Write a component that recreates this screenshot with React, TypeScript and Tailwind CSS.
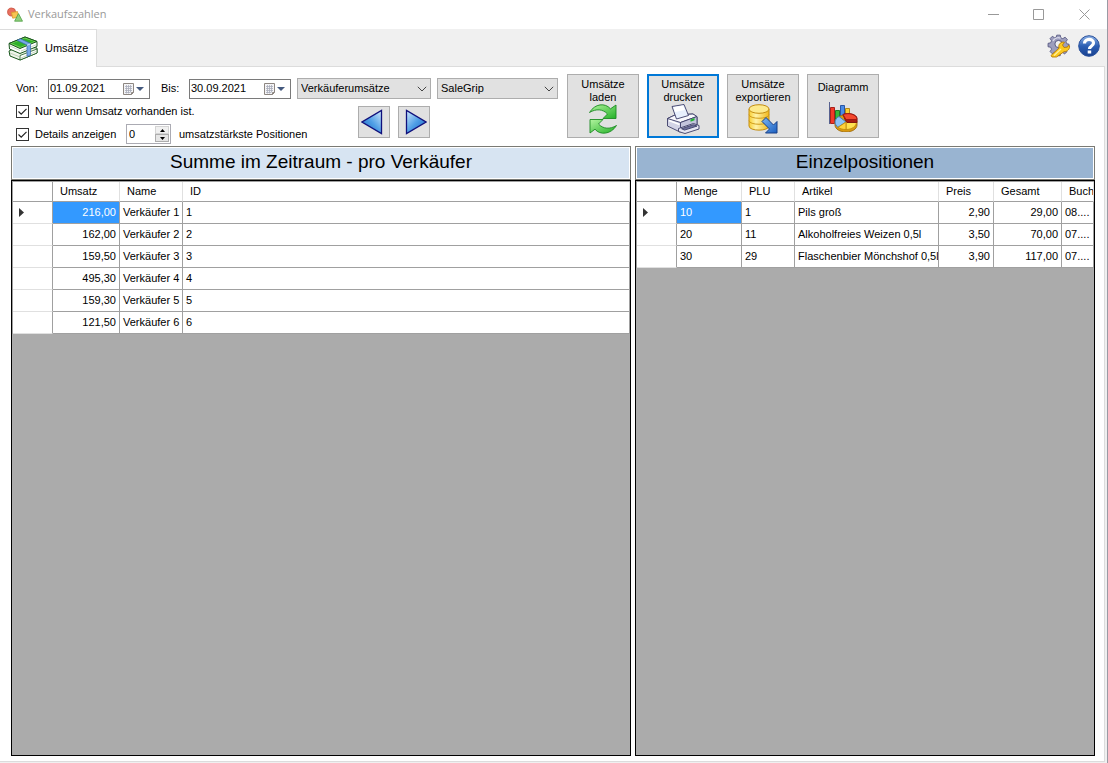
import { useState } from 'react';
import type { ReactNode } from 'react';
import clsx from 'clsx';

type Column = {
    title: string
    width?: string
    right?: boolean
}

const sellerColumns: Column[] = [
    { title: 'Umsatz', width: 'w-[67px]', right: true },
    { title: 'Name', width: 'w-[63px]' },
    { title: 'ID' },
]

const sellerRows = [
    ['216,00', 'Verkäufer 1', '1'],
    ['162,00', 'Verkäufer 2', '2'],
    ['159,50', 'Verkäufer 3', '3'],
    ['495,30', 'Verkäufer 4', '4'],
    ['159,30', 'Verkäufer 5', '5'],
    ['121,50', 'Verkäufer 6', '6'],
]

const itemColumns: Column[] = [
    { title: 'Menge', width: 'w-[65px]' },
    { title: 'PLU', width: 'w-[53px]' },
    { title: 'Artikel', width: 'w-[144px]' },
    { title: 'Preis', width: 'w-[55px]', right: true },
    { title: 'Gesamt', width: 'w-[68px]', right: true },
    { title: 'Buch' },
]

const itemRows = [
    ['10', '1', 'Pils groß', '2,90', '29,00', '08....'],
    ['20', '11', 'Alkoholfreies Weizen 0,5l', '3,50', '70,00', '07....'],
    ['30', '29', 'Flaschenbier Mönchshof 0,5l', '3,90', '117,00', '07....'],
]

function AppIcon() {
    return (
        <svg width="16" height="16" viewBox="0 0 16 16">
            <circle cx="4.6" cy="5" r="4" fill="#e8705f" stroke="#c9503f" strokeWidth=".8" />
            <path d="M4.5 5.5l6-.9 1 5.6-5.8 1z" fill="#f7c552" stroke="#d99a28" strokeWidth=".8" />
            <path d="M11.5 6.6l4 7.6H7.6z" fill="#8fd07c" stroke="#4fa044" strokeWidth=".8" />
        </svg>
    )
}

function MoneyIcon() {
    return (
        <svg width="30" height="26" viewBox="0 0 30 26">
            <path d="M1 15l10-5 18 2v5L12 24 2 20z" fill="#eef5ea" stroke="#17561b" />
            <path d="M12 19.5V24l17-7v-4z" fill="#fff" stroke="#17561b" strokeWidth=".8" />
            <path d="M2 17l10 4M13 22l15-6.5" stroke="#a9c3a3" strokeWidth=".7" fill="none" />
            <path d="M1 7.500L17 1l12 4.500v5L12 17.500 1.500 13z" fill="#fff" stroke="#17561b" />
            <path d="M1 7.500L17 1l12 4.500-17 7z" fill="#7bd65b" stroke="#17561b" />
            <path d="M4 7.500L16.500 2.500l9.500 3-13.500 5.500z" fill="#2fb12b" />
            <path d="M2 10l10 4.500M13 15l15-6.200" stroke="#a9c3a3" strokeWidth=".7" fill="none" />
            <path d="M9 4.300l3.500-1.500 10 4.700v11.500l-3.500 1.500V9z" fill="#79a9e8" stroke="#3767b0" strokeWidth=".7" />
            <path d="M19 9.300l3.500-1.500" stroke="#cfe1fa" strokeWidth="1" />
        </svg>
    )
}

function GearIcon() {
    return (
        <svg width="24" height="24" viewBox="0 0 24 24">
            <g transform="translate(11.500 10)">
                <g fill="#9c9dbd" stroke="#4c4d78" strokeWidth=".9">
                    <path d="M-2-9.500h4l.6 3 2.300 1 2.600-1.700 2.600 2.700-1.600 2.500.9 2.300 2.600.5v3l-3 .6-1 2.200 1.700 2.700-2.700 2.500-2.600-1.700-1.900.9-.6 2.900h-3.500l-.6-2.900-2.300-1-2.600 1.700-2.500-2.600 1.700-2.600-1-2.200-3-.6V-.2l3-.6 1-2.300-1.700-2.500 2.600-2.600 2.600 1.700 2-.9z" transform="translate(0 -.5) scale(.88)" />
                </g>
                <circle r="3.600" fill="#f0f0f0" stroke="#4c4d78" strokeWidth=".9" />
                <path d="M-5.500-3A6 6 0 0 1 2-5.800" stroke="#d9d9ea" strokeWidth="1.300" fill="none" />
            </g>
            <path d="M4 21.500l8-7.500c-.8-3 .8-5.600 4-6l1.500.3-2 2.700 1.500 2.500 3.500-.4 1.200-2 .8 1c.3 3-2 5.600-5.500 5.600L9.500 23H5z" fill="#fcc91f" stroke="#b57a08" strokeWidth=".9" />
            <path d="M7 21.500l7-6.500" stroke="#fff0a0" strokeWidth="1.200" />
        </svg>
    )
}

function HelpIcon() {
    return (
        <svg width="22" height="22" viewBox="0 0 22 22">
            <defs>
                <linearGradient id="help" x1="0" y1="0" x2="0" y2="1">
                    <stop offset="0" stopColor="#8db2e6" />
                    <stop offset=".5" stopColor="#2c5fb4" />
                    <stop offset="1" stopColor="#17408f" />
                </linearGradient>
            </defs>
            <circle cx="11" cy="11" r="10.300" fill="url(#help)" stroke="#2a519c" />
            <path d="M6.500 8.500c0-5.300 9-5.300 9-.5 0 3.200-4 2.700-4 6" fill="none" stroke="#fff" strokeWidth="3.200" />
            <rect x="9.700" y="15.500" width="3.500" height="3" fill="#fff" />
        </svg>
    )
}

function CalendarIcon() {
    return (
        <svg width="22" height="14" viewBox="0 0 22 14">
            <path d="M.5 1.500h10v9l-2 2h-8z" fill="#f4f4f6" stroke="#8d8681" />
            <path d="M2 4.500h7M2 6.500h7M2 8.500h7M2 10.500h5M3.500 3v8.500M5.500 3v8.500M7.500 3v7.500" stroke="#a9adbb" strokeWidth=".8" />
            <path d="M8.500 12.500v-2h2" fill="none" stroke="#8d8681" />
            <path d="M13 5h8l-4 4z" fill="#44597e" />
        </svg>
    )
}

function ReloadIcon() {
    return (
        <svg width="30" height="30" viewBox="0 0 30 30">
            <defs>
                <linearGradient id="reload" x1="0" y1="0" x2="1" y2="1">
                    <stop offset="0" stopColor="#b3f5a0" />
                    <stop offset="1" stopColor="#22b026" />
                </linearGradient>
            </defs>
            <g fill="url(#reload)" stroke="#1c8a22" strokeWidth=".9" strokeLinejoin="round">
                <path d="M1.500 8.500C7-.5 17-1.500 22.500 4.800L28 1v13.500H15l4.500-4.500C15 5 8 4.500 1.500 8.500z" />
                <path d="M28.500 21.500C23 30.500 12 31.500 7 25.200L2 29V15.500h13l-4.500 4.500C15 25 22 25.500 28.500 21.500z" />
            </g>
        </svg>
    )
}

function PrinterIcon() {
    return (
        <svg width="34" height="30" viewBox="0 0 34 30">
            <g stroke="#3b3c66" strokeLinejoin="round" strokeWidth=".9">
                <path d="M1.500 14.500L9 11l18-1 4 3v9l-17 6L1.500 22z" fill="#d3d4e6" />
                <path d="M1.500 14.500L9 11l18-1 4 2.500-16.500 6z" fill="#f8f8fc" />
                <path d="M6 2.500L18 .5l4.500 11L10.500 15z" fill="#e8f0fd" />
                <path d="M14.500 18.500l16.500-6v8l-16.500 7z" fill="#c3c4dc" />
                <path d="M12.500 24.500l15-5 5.500 2v3.500l-14 4.500-6.500-2z" fill="#e6e6f2" />
                <path d="M15.500 24.700l12-4 3.500 1.400-12.500 4z" fill="#6e709c" />
            </g>
            <path d="M7.500 3.300L17 1.500l2 4.500-10 2z" fill="#fff" />
            <path d="M24.500 15.500l4-1.500v2.200l-4 1.500z" fill="#22b430" />
            <path d="M3 16.500l10.500 4" stroke="#fff" strokeWidth="1.500" />
        </svg>
    )
}

function ExportIcon() {
    return (
        <svg width="30" height="30" viewBox="0 0 30 30">
            <defs>
                <linearGradient id="gold" x1="0" x2="1">
                    <stop offset="0" stopColor="#f9cf33" />
                    <stop offset=".35" stopColor="#fff3a8" />
                    <stop offset="1" stopColor="#f2b81a" />
                </linearGradient>
                <linearGradient id="arrow" x1="0" y1="0" x2="1" y2="1">
                    <stop offset="0" stopColor="#7bb6f4" />
                    <stop offset="1" stopColor="#1c5fc0" />
                </linearGradient>
            </defs>
            <path d="M1 5v17c0 5.500 20 5.500 20 0V5z" fill="url(#gold)" stroke="#c48d10" />
            <path d="M1 10.500c0 5 20 5 20 0M1 16.500c0 5 20 5 20 0" fill="none" stroke="#d09c1a" />
            <ellipse cx="11" cy="5" rx="10" ry="4.300" fill="#fdea8c" stroke="#c48d10" />
            <path d="M14 17.500l4-4 7.500 7.500 3.500-3.500V29H17.500l4-4z" fill="url(#arrow)" stroke="#173f87" strokeLinejoin="round" />
        </svg>
    )
}

function ChartIcon() {
    return (
        <svg width="30" height="30" viewBox="0 0 30 30">
            <path d="M1.500 0v22" stroke="#57618f" />
            <g strokeWidth=".9">
                <path d="M2.500 5.500h4v16h-4z" fill="#f23a27" stroke="#a01510" />
                <path d="M7.500 8.500h4v13h-4z" fill="#37b83a" stroke="#176f1c" />
                <path d="M12.500 3.500h4v14h-4z" fill="#4a8be6" stroke="#1d4b9c" />
                <path d="M17.500 6.500h4v10h-4z" fill="#fbd034" stroke="#ad800c" />
                <path d="M7 20c0-4 5-7 11-7s11 3 11 7v3c0 4-5 7-11 7S7 27 7 23z" fill="#d99a10" stroke="#a06b08" />
                <path d="M18 20v7.500c6 0 10.500-3.200 10.500-7.500z" fill="#ffe04e" stroke="#c18c10" />
                <path d="M18 20L11 14.500c-5 2.500-5 8-1 10.800z" fill="#8ec3f5" stroke="#3b76bd" />
                <path d="M18 20l-8 5.300c2.500 1.800 5 2.200 8 2.200z" fill="#ffd23a" stroke="#c18c10" />
                <path d="M17 17.500l-2-5c5-2 14-.5 14 4v4H19z" fill="#a81c10" stroke="#7d1009" />
                <path d="M18 17.500l-3-5c5-2 14-.5 14 5z" fill="#f4482d" stroke="#a01510" />
            </g>
        </svg>
    )
}

function Triangle({ left }: { left?: boolean }) {
    return (
        <svg width="22" height="26" viewBox="0 0 22 26" className={clsx(left && '-scale-x-100')}>
            <defs>
                <linearGradient id="tri" x1="0" y1="0" x2="1" y2="1">
                    <stop offset="0" stopColor="#d3eafc" />
                    <stop offset=".5" stopColor="#4f9fe6" />
                    <stop offset="1" stopColor="#1a63bd" />
                </linearGradient>
            </defs>
            <path d="M1.500 1.500v23L21 13z" fill="url(#tri)" stroke="#10107c" strokeWidth="1.300" />
        </svg>
    )
}

function DateBox({ id, label, labelWidth, value }: { id: string, label: string, labelWidth: string, value: string }) {
    return (
        <div className="flex items-center">
            <label htmlFor={id} className={clsx('shrink-0', labelWidth)}>{label}</label>
            <div className="flex h-5 w-[102px] items-center border border-[#7a7a7a] bg-white pr-1">
                <input id={id} defaultValue={value} className="w-0 flex-1 pl-px outline-none" />
                <button type="button" aria-label="Kalender"><CalendarIcon /></button>
            </div>
        </div>
    )
}

function Dropdown({ label, options, className }: { label: string, options: string[], className: string }) {
    return (
        <div className={clsx('relative', className)}>
            <select aria-label={label} className="h-[21px] w-full appearance-none border border-[#adadad] bg-[#e1e1e1] pl-[3px] outline-none">
                {options.map((o) => <option key={o}>{o}</option>)}
            </select>
            <svg width="10" height="6" viewBox="0 0 10 6" className="pointer-events-none absolute top-2 right-1">
                <path d="M.8.8L5 5 9.200.8" fill="none" stroke="#444" />
            </svg>
        </div>
    )
}

function Check({ label }: { label: string }) {
    return (
        <label className="flex items-center gap-[6px]">
            <span className="relative flex">
                <input type="checkbox" defaultChecked className="peer size-[13px] appearance-none border border-[#333] bg-white" />
                <svg width="13" height="13" viewBox="0 0 13 13" className="pointer-events-none absolute hidden peer-checked:block">
                    <path d="M2.500 6.500l2.700 2.700 5.300-5.400" fill="none" stroke="#222" strokeWidth="1.200" />
                </svg>
            </span>
            {label}
        </label>
    )
}

function ActionButton({ lines, active, children }: { lines: string[], active?: boolean, children: ReactNode }) {
    return (
        <button
            type="button"
            className={clsx(
                'flex h-16 w-[72px] flex-col items-center justify-center bg-[#e1e1e1] leading-[13px]',
                active ? 'border-2 border-[#0078d7]' : 'border border-[#adadad]',
                lines.length === 1 && 'gap-2'
            )}
        >
            <span>{lines.map((l) => <span key={l} className="block">{l}</span>)}</span>
            {children}
        </button>
    )
}

function Grid({ columns, rows }: { columns: Column[], rows: string[][] }) {
    return (
        <table className="w-full table-fixed border-separate border-spacing-0 border-t border-l border-[#a0a0a0] bg-white">
            <thead>
                <tr className="h-5">
                    <th aria-label="Zeile" className="w-10 border-r border-b border-[#a0a0a0]"></th>
                    {columns.map((c) => (
                        <th
                            key={c.title}
                            className={clsx('overflow-hidden border-r border-b border-r-[#e0e0e0] border-b-[#a0a0a0] pl-[7px] text-left font-normal whitespace-nowrap', c.width)}
                        >
                            {c.title}
                        </th>
                    ))}
                </tr>
            </thead>
            <tbody>
                {rows.map((row, r) => (
                    <tr key={r} className="h-[22px]">
                        <td className="border-r border-b border-r-[#a0a0a0] border-b-[#e0e0e0] pl-[6px]">
                            {r === 0 && (
                                <svg width="5" height="9" viewBox="0 0 5 9"><path d="M0 0v9l5-4.500z" fill="#333" /></svg>
                            )}
                        </td>
                        {row.map((cell, i) => (
                            <td
                                key={i}
                                className={clsx(
                                    'overflow-hidden border-r border-b border-[#a0a0a0] px-[3px] whitespace-nowrap',
                                    columns[i].right && 'text-right',
                                    r === 0 && i === 0 && 'bg-[#3399ff] text-white'
                                )}
                            >
                                {cell}
                            </td>
                        ))}
                    </tr>
                ))}
            </tbody>
        </table>
    )
}

function Panel({ title, tone, children }: { title: string, tone: string, children: ReactNode }) {
    return (
        <section className="flex min-w-0 flex-col">
            <h2 className="border border-[#7a7a74] p-px text-[19px]">
                <span className={clsx('block h-[30px] text-center leading-[27px]', tone)}>{title}</span>
            </h2>
            <div className="flex-1 border border-black bg-[#ababab]">{children}</div>
        </section>
    )
}

export default function App() {
    const [count, setCount] = useState(0)

    return (
        <div className="flex min-h-screen flex-col border-r border-[#9a9aa4] bg-[#f0f0f0] font-['Liberation_Sans',Arial,sans-serif] text-[11px] text-black">
            <header className="flex h-[29px] items-center bg-white pl-[7px]">
                <AppIcon />
                <h1 className="flex-1 pl-[5px] font-['Open_Sans',sans-serif] text-[11px] text-[#999]">Verkaufszahlen</h1>
                <button type="button" aria-label="Minimieren" className="flex w-[45px] justify-center">
                    <svg width="11" height="11" viewBox="0 0 11 11"><path d="M0 5.500h11" stroke="#999" /></svg>
                </button>
                <button type="button" aria-label="Maximieren" className="flex w-[45px] justify-center">
                    <svg width="11" height="11" viewBox="0 0 11 11"><path d="M.5.5h10v10H.5z" fill="none" stroke="#999" /></svg>
                </button>
                <button type="button" aria-label="Schließen" className="flex w-[46px] justify-center">
                    <svg width="11" height="11" viewBox="0 0 11 11"><path d="M.5.5l10 10M10.500.5l-10 10" stroke="#999" /></svg>
                </button>
            </header>

            <div className="flex h-[38px]">
                <button type="button" className="flex w-[97px] items-center gap-[7px] border-t border-r border-[#dcdcdc] bg-white pl-2">
                    <MoneyIcon />
                    Umsätze
                </button>
                <div className="mr-[2px] flex flex-1 items-center justify-end gap-[7px] border-b border-[#dcdcdc] pr-[5px] pb-1">
                    <button type="button" aria-label="Einstellungen"><GearIcon /></button>
                    <button type="button" aria-label="Hilfe"><HelpIcon /></button>
                </div>
            </div>

            <main className="mr-[2px] mb-px flex flex-1 flex-col border-r border-b border-[#dcdcdc] bg-white pt-[7px] pr-[9px] pb-[5px] pl-[11px]">
                <div className="flex gap-[9px] pl-[5px]">
                    <div className="w-[542px] pt-1">
                        <div className="flex items-center">
                            <DateBox id="von" label="Von:" labelWidth="w-8" value="01.09.2021" />
                            <div className="w-[11px]"></div>
                            <DateBox id="bis" label="Bis:" labelWidth="w-7" value="30.09.2021" />
                            <div className="flex flex-1 gap-[6px] pl-[6px]">
                                <Dropdown label="Auswertung" options={['Verkäuferumsätze']} className="w-[134px]" />
                                <Dropdown label="System" options={['SaleGrip']} className="flex-1" />
                            </div>
                        </div>
                        <div className="flex pt-1">
                            <div className="w-[342px]">
                                <div className="flex h-4 items-center">
                                    <Check label="Nur wenn Umsatz vorhanden ist." />
                                </div>
                                <div className="flex h-[26px] items-center pt-1">
                                    <div className="w-[110px]"><Check label="Details anzeigen" /></div>
                                    <div className="flex h-5 w-[45px] border border-[#ababb3] bg-white p-px">
                                        <input
                                            id="anzahl"
                                            value={count}
                                            onChange={(e) => setCount(Number(e.target.value) || 0)}
                                            className="w-0 flex-1 pl-px outline-none"
                                        />
                                        <div className="flex w-[14px] flex-col">
                                            <button type="button" aria-label="Mehr" onClick={() => setCount(count + 1)} className="flex flex-1 items-center justify-center border border-[#d4d4d4] bg-[#f0f0f0]">
                                                <svg width="5" height="3" viewBox="0 0 5 3"><path d="M0 3h5L2.500 0z" /></svg>
                                            </button>
                                            <button type="button" aria-label="Weniger" onClick={() => setCount(Math.max(0, count - 1))} className="flex flex-1 items-center justify-center border border-[#adadad] bg-[#e6e6e6]">
                                                <svg width="5" height="3" viewBox="0 0 5 3"><path d="M0 0h5L2.500 3z" /></svg>
                                            </button>
                                        </div>
                                    </div>
                                    <label htmlFor="anzahl" className="pl-2">umsatzstärkste Positionen</label>
                                </div>
                            </div>
                            <div className="flex gap-2 pt-[3px]">
                                <button type="button" aria-label="Zurück" className="flex size-8 items-center justify-center border border-[#adadad] bg-[#e1e1e1] pr-1"><Triangle left /></button>
                                <button type="button" aria-label="Weiter" className="flex size-8 items-center justify-center border border-[#adadad] bg-[#e1e1e1] pl-1"><Triangle /></button>
                            </div>
                        </div>
                    </div>
                    <div className="flex gap-2">
                        <ActionButton lines={['Umsätze', 'laden']}><ReloadIcon /></ActionButton>
                        <ActionButton lines={['Umsätze', 'drucken']} active><PrinterIcon /></ActionButton>
                        <ActionButton lines={['Umsätze', 'exportieren']}><ExportIcon /></ActionButton>
                        <ActionButton lines={['Diagramm']}><ChartIcon /></ActionButton>
                    </div>
                </div>

                <div className="grid flex-1 grid-cols-[31fr_23fr] gap-1 pt-px">
                    <Panel title="Summe im Zeitraum - pro Verkäufer" tone="bg-[#d7e4f2]">
                        <Grid columns={sellerColumns} rows={sellerRows} />
                    </Panel>
                    <Panel title="Einzelpositionen" tone="bg-[#99b4d1]">
                        <Grid columns={itemColumns} rows={itemRows} />
                    </Panel>
                </div>
            </main>
        </div>
    )
}
